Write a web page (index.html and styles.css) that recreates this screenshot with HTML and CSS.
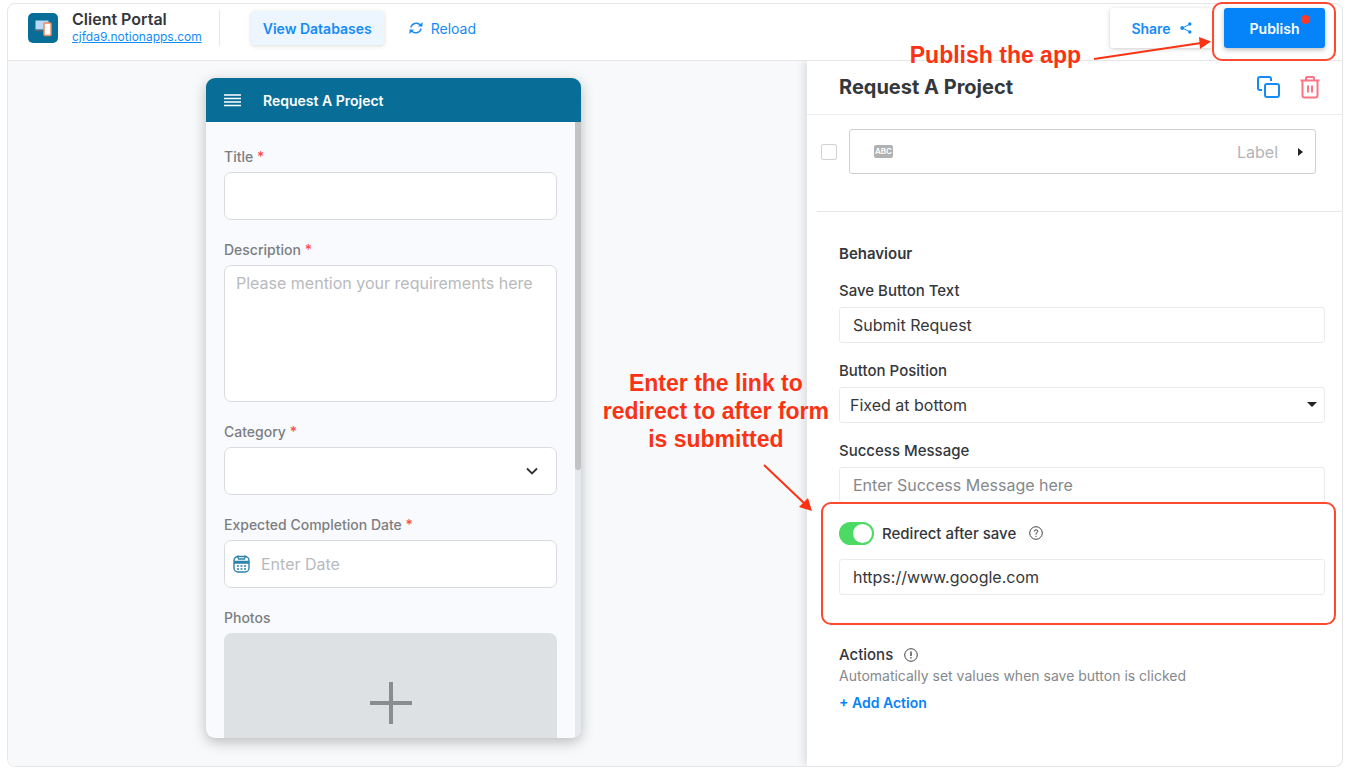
FILE: index.html
```
<!DOCTYPE html>
<html lang="en">
<head>
    <meta charset="UTF-8">
    <title>Client Portal</title>
    <meta name="viewport" content="width=device-width, initial-scale=1">
    <link rel="stylesheet" href="styles.css">
</head>
<body>
<div class="app">

    <header class="topbar">
        <svg class="logo" viewBox="0 0 30 30" aria-hidden="true">
            <rect width="30" height="30" rx="5" fill="#086e98"/>
            <rect x="7.500" y="7.500" width="13" height="9" fill="#b9d9f7"/>
            <path d="M6.500 17.500h9" stroke="#5a6470" stroke-width="1.500"/>
            <rect x="16" y="10" width="7" height="12.500" rx="1" fill="#fff" stroke="#ef8a5f" stroke-width="1.500"/>
        </svg>
        <div class="app-name">
            <h1>Client Portal</h1>
            <a href="#">cjfda9.notionapps.com</a>
        </div>
        <div class="separator"></div>
        <button class="btn btn-light" type="button">View Databases</button>
        <button class="btn-reload" type="button">
            <svg width="14" height="14" viewBox="0 0 14 14" fill="none" stroke="currentColor" stroke-width="1.500" aria-hidden="true">
                <path d="M2 6.500C2.500 2.500 8 0.500 11.500 4M12 7.500C11.500 11.500 6 13.500 2.500 10"/>
                <path d="M13.500 1v4.500h-4.500zM0.500 13V8.500h4.500z" fill="currentColor" stroke="none"/>
            </svg>
            Reload
        </button>
        <div class="topbar-right">
            <button class="btn btn-share" type="button">
                Share
                <svg width="12" height="12" viewBox="0 0 12 12" aria-hidden="true">
                    <path d="M10 2L2.500 6L10 10" fill="none" stroke="currentColor"/>
                    <g fill="currentColor"><circle cx="9.800" cy="2" r="1.700"/><circle cx="2.200" cy="6" r="1.900"/><circle cx="9.800" cy="10" r="1.700"/></g>
                </svg>
            </button>
            <div class="publish">
                <button class="btn btn-primary" type="button">Publish</button>
                <span class="dot"></span>
                <span class="highlight highlight-publish"></span>
                <p class="note note-publish">Publish the app</p>
                <svg class="arrow arrow-publish" width="120" height="26" viewBox="0 0 120 26" aria-hidden="true">
                    <path d="M1 22L108 6" stroke="#fb3314" stroke-width="2"/>
                    <path d="M106 0L118 4.500L107 12z" fill="#fb3314"/>
                </svg>
            </div>
        </div>
    </header>

    <main class="workspace">
        <section class="canvas">
            <div class="phone">
                <div class="phone-header">
                    <svg width="17" height="14" viewBox="0 0 17 14" aria-hidden="true">
                        <path d="M0 2h17M0 5.500h17M0 9h17M0 12.500h17" stroke="#fff" stroke-width="1.400"/>
                    </svg>
                    <h2>Request A Project</h2>
                </div>
                <div class="phone-body">
                    <form class="phone-form">
                        <div class="field">
                            <label for="title">Title <i>*</i></label>
                            <input id="title" type="text">
                        </div>
                        <div class="field">
                            <label for="description">Description <i>*</i></label>
                            <textarea id="description" placeholder="Please mention your requirements here"></textarea>
                        </div>
                        <div class="field">
                            <label for="category">Category <i>*</i></label>
                            <div class="control">
                                <select id="category"><option></option></select>
                                <svg class="chevron" width="12" height="8" viewBox="0 0 12 8" fill="none" stroke="#333" stroke-width="1.800" aria-hidden="true"><path d="M1 1.500L6 6.500L11 1.500"/></svg>
                            </div>
                        </div>
                        <div class="field">
                            <label for="date">Expected Completion Date <i>*</i></label>
                            <div class="control">
                                <svg class="calendar" width="17" height="18" viewBox="0 0 17 18" fill="none" stroke="#2d83ab" stroke-width="1.400" aria-hidden="true">
                                    <rect x="1" y="1.500" width="15" height="15.500" rx="4"/>
                                    <path d="M1 6.500h15M1 8h15M5 0.500v3M12 0.500v3M5 4h7"/>
                                    <path d="M4 11h2M7.500 11h2M11 11h2M4 14h2M7.500 14h2M11 14h2" stroke-width="1.600"/>
                                </svg>
                                <input id="date" class="with-icon" type="text" placeholder="Enter Date">
                            </div>
                        </div>
                        <div class="field">
                            <label for="photos">Photos</label>
                            <button id="photos" class="upload" type="button" aria-label="Add photos">
                                <svg width="42" height="42" viewBox="0 0 42 42" aria-hidden="true"><path d="M21 0v42M0 21h42" stroke="#8a8d8f" stroke-width="4"/></svg>
                            </button>
                        </div>
                    </form>
                    <div class="scrollbar"><div class="thumb"></div></div>
                </div>
            </div>
        </section>

        <aside class="panel">
            <div class="panel-header">
                <h2>Request A Project</h2>
                <button class="icon-btn" type="button" aria-label="Duplicate">
                    <svg width="24" height="24" viewBox="0 0 24 24" fill="none" stroke="#158bf8" stroke-width="2" aria-hidden="true">
                        <rect x="9" y="9" width="14" height="13" rx="2"/>
                        <path d="M6 15H4a2 2 0 0 1-2-2V4a2 2 0 0 1 2-2h9a2 2 0 0 1 2 2v2"/>
                    </svg>
                </button>
                <button class="icon-btn" type="button" aria-label="Delete">
                    <svg width="20" height="24" viewBox="0 0 20 24" fill="none" stroke="#fb7585" stroke-width="2" aria-hidden="true">
                        <path d="M0.500 5.500h19M6 5V3q0-1 1-1h6q1 0 1 1v2M2.500 6v14.500q0 2 2 2h11q2 0 2-2V6M8 10.500v7M12 10.500v7"/>
                    </svg>
                </button>
            </div>

            <div class="column-row">
                <input type="checkbox" aria-label="Show column">
                <button class="column-card" type="button">
                    <span class="tag">ABC</span>
                    <span class="column-label">Label</span>
                    <span class="caret-right"></span>
                </button>
            </div>

            <div class="settings">
                <h3>Behaviour</h3>
                <div class="setting">
                    <label for="save-text">Save Button Text</label>
                    <input id="save-text" type="text" value="Submit Request">
                </div>
                <div class="setting">
                    <label for="position">Button Position</label>
                    <div class="control">
                        <select id="position"><option>Fixed at bottom</option></select>
                        <span class="caret-down"></span>
                    </div>
                </div>
                <div class="setting">
                    <label for="message">Success Message</label>
                    <input id="message" type="text" placeholder="Enter Success Message here">
                </div>

                <div class="redirect">
                    <div class="toggle-row">
                        <input id="redirect" class="toggle" type="checkbox" checked>
                        <label for="redirect">Redirect after save</label>
                        <svg width="14" height="14" viewBox="0 0 14 14" fill="none" stroke="#444" aria-hidden="true">
                            <circle cx="7" cy="7" r="6.300"/><path d="M5.200 5.600q0-1.800 1.800-1.800t1.800 1.600q0 1-1.800 2v1.200M7 9.800v1.200"/>
                        </svg>
                    </div>
                    <input type="text" aria-label="Redirect link" value="https://www.google.com">
                    <span class="highlight highlight-redirect"></span>
                    <p class="note note-redirect">Enter the link to<br>redirect to after form<br>is submitted</p>
                    <svg class="arrow arrow-redirect" width="50" height="50" viewBox="0 0 50 50" aria-hidden="true">
                        <path d="M1 2L42 41" stroke="#fb3314" stroke-width="2"/>
                        <path d="M49 48L36 44L45 35z" fill="#fb3314"/>
                    </svg>
                </div>

                <div class="actions">
                    <h3>
                        Actions
                        <svg width="14" height="14" viewBox="0 0 14 14" fill="none" stroke="#444" aria-hidden="true">
                            <circle cx="7" cy="7" r="6.300"/><path d="M7 3.500v4.500M7 9.300v1.300" stroke-width="1.400"/>
                        </svg>
                    </h3>
                    <p>Automatically set values when save button is clicked</p>
                    <button class="add-action" type="button">+ Add Action</button>
                </div>
            </div>
        </aside>
    </main>

</div>
</body>
</html>
```
FILE: styles.css
```
*, *:before, *:after {
    box-sizing: border-box;
    margin: 0;
    padding: 0;
}

body {
    height: 100vh;
    padding: 3px 4px 1px 7px;
    background: #fff;
    color: #34373b;
    font-family: Inter, "Open Sans", sans-serif;
    font-size: 15px;
}

button, input, select, textarea {
    font: inherit;
    color: inherit;
}

button {
    border: 0;
    background: transparent;
    cursor: pointer;
}

.app {
    height: 100%;
    display: flex;
    flex-direction: column;
    border: 1px solid #e6e6e8;
    border-radius: 8px;
}

/* Top bar */
.topbar {
    height: 57px;
    flex-shrink: 0;
    display: flex;
    align-items: center;
    padding: 0 17px 8px 20px;
    border-bottom: 1px solid #e6e6e8;
}

.logo {
    width: 30px;
    height: 30px;
    margin-right: 14px;
}

.app-name h1 {
    font-size: 16px;
    font-weight: 600;
    line-height: 18px;
}

.app-name a {
    display: block;
    color: #158bf8;
    font-size: 12px;
    line-height: 18px;
}

.separator {
    width: 1px;
    height: 36px;
    margin: 0 31px 0 17px;
    background: #e6e6e8;
}

.btn {
    height: 40px;
    border-radius: 3px;
    font-size: 14px;
    font-weight: 600;
}

.btn-light {
    height: 34px;
    padding: 0 12px;
    background: #edf6ff;
    color: #158bf8;
    box-shadow: 0 1px 4px rgba(0, 0, 0, 0.15);
}

.btn-reload {
    display: flex;
    align-items: center;
    gap: 8px;
    margin-left: 25px;
    color: #158bf8;
    font-size: 14px;
}

.topbar-right {
    display: flex;
    gap: 11px;
    margin-left: auto;
}

.btn-share {
    width: 103px;
    display: flex;
    align-items: center;
    justify-content: center;
    gap: 9px;
    background: #fff;
    color: #158bf8;
    box-shadow: 0 1px 4px rgba(0, 0, 0, 0.2);
}

.publish {
    position: relative;
}

.btn-primary {
    width: 101px;
    background: #0583f8;
    color: #fff;
    box-shadow: 0 2px 5px rgba(0, 0, 0, 0.25);
}

.dot {
    position: absolute;
    top: 7px;
    right: 15px;
    width: 9px;
    height: 9px;
    border-radius: 50%;
    background: #fb3a2a;
}

/* Notes drawn over the app */
.highlight {
    position: absolute;
    z-index: 2;
    border: 2px solid #fb4a30;
    border-radius: 10px;
    pointer-events: none;
}

.highlight-publish {
    inset: -6px -11px -13px -12px;
}

.highlight-redirect {
    inset: -19px -11px -30px -18px;
}

.note {
    position: absolute;
    z-index: 2;
    color: #fb3314;
    font-family: "Liberation Sans", Arial, sans-serif;
    font-size: 23px;
    font-weight: 700;
    line-height: 28px;
    text-align: center;
    white-space: nowrap;
}

.note-publish {
    top: 33px;
    right: 244px;
}

.note-redirect {
    right: calc(100% + 10px);
    bottom: 142px;
}

.arrow {
    position: absolute;
    z-index: 2;
    fill: none;
}

.arrow-publish {
    top: 29px;
    right: 112px;
}

.arrow-redirect {
    right: calc(100% + 26px);
    bottom: 82px;
}

/* Preview */
.workspace {
    flex: 1;
    min-height: 0;
    display: flex;
}

.canvas {
    flex: 1;
    display: flex;
    justify-content: center;
    padding: 17px 28px 28px 0;
    border-radius: 0 0 0 8px;
    background: #f7f9fb;
}

.phone {
    width: 375px;
    display: flex;
    flex-direction: column;
    overflow: hidden;
    border-radius: 9px;
    background: #f9fafd;
    box-shadow: 0 4px 14px rgba(0, 0, 0, 0.25);
}

.phone-header {
    height: 44px;
    flex-shrink: 0;
    display: flex;
    align-items: center;
    gap: 22px;
    padding: 0 18px;
    background: #086e98;
    color: #fff;
}

.phone-header h2 {
    font-size: 14px;
    font-weight: 600;
}

.phone-body {
    flex: 1;
    min-height: 0;
    display: flex;
}

.phone-form {
    flex: 1;
    display: flex;
    flex-direction: column;
    gap: 21px;
    padding: 26px 18px 0;
    overflow: hidden;
}

.field label {
    display: block;
    margin-bottom: 6px;
    color: #7b7e82;
    font-size: 14px;
    font-weight: 500;
    line-height: 18px;
}

.field i {
    color: #ff4d4f;
    font-style: normal;
}

.field input,
.field select,
.field textarea {
    display: block;
    width: 100%;
    height: 48px;
    padding: 0 11px;
    border: 1px solid #d9dcdf;
    border-radius: 7px;
    background: #fff;
    font-size: 16px;
    appearance: none;
}

.field textarea {
    height: 137px;
    padding-top: 7px;
    resize: none;
}

.field input.with-icon {
    padding-left: 36px;
}

.field ::placeholder {
    color: #b8babd;
}

.control {
    position: relative;
}

.chevron {
    position: absolute;
    top: 20px;
    right: 19px;
}

.calendar {
    position: absolute;
    top: 15px;
    left: 9px;
}

.upload {
    width: 100%;
    height: 140px;
    border-radius: 8px;
    background: #dde1e3;
}

.upload svg {
    display: block;
    margin: 0 auto;
}

.scrollbar {
    width: 6px;
    background: #e6e8f0;
}

.thumb {
    height: 348px;
    border-radius: 0 0 3px 3px;
    background: #c3c3c5;
}

/* Settings panel */
.panel {
    flex: 0 0 535px;
    border-radius: 0 0 8px 0;
    background: #fff;
    box-shadow: -3px 0 10px rgba(0, 0, 0, 0.12);
    clip-path: inset(0 0 0 -240px);
}

.panel-header {
    height: 54px;
    display: flex;
    align-items: center;
    gap: 20px;
    padding: 0 22px 2px 32px;
    border-bottom: 1px solid #ededee;
}

.panel-header h2 {
    flex: 1;
    font-size: 20px;
    font-weight: 700;
}

.icon-btn svg {
    display: block;
}

.column-row {
    display: flex;
    align-items: center;
    gap: 12px;
    margin-left: 10px;
    padding: 14px 26px 37px 4px;
    border-bottom: 1px solid #e6e6e8;
}

.column-row input {
    width: 16px;
    height: 16px;
    border: 1px solid #d2d3d5;
    border-radius: 2px;
    appearance: none;
}

.column-card {
    flex: 1;
    height: 45px;
    display: flex;
    align-items: center;
    padding: 0 12px 0 24px;
    border: 1px solid #cfd0d2;
    border-radius: 3px;
}

.tag {
    padding: 0 1px;
    border-radius: 2px;
    background: #b0b1b3;
    color: #fff;
    font-size: 8px;
    font-weight: 600;
    line-height: 13px;
}

.column-label {
    margin: 0 20px 0 auto;
    color: #b2b4b7;
    font-size: 16px;
}

.caret-right {
    border: 4px solid transparent;
    border-left: 5px solid #222;
    border-right: 0;
}

.caret-down {
    position: absolute;
    top: 15px;
    right: 8px;
    border: 5px solid transparent;
    border-top-color: #222;
    border-bottom: 0;
}

.settings {
    padding: 33px 17px 0 32px;
}

.settings h3 {
    font-size: 15px;
    font-weight: 600;
    line-height: 18px;
}

.setting {
    margin-top: 19px;
}

.setting label {
    display: block;
    margin-bottom: 7px;
    font-weight: 500;
    line-height: 18px;
}

.settings input[type="text"],
.settings select {
    display: block;
    width: 100%;
    height: 36px;
    padding: 0 13px;
    border: 1px solid #ebebed;
    border-radius: 3px;
    background: #fff;
    font-size: 16px;
    appearance: none;
}

.settings select {
    padding: 0 10px;
}

.settings ::placeholder {
    color: #85888c;
}

.redirect {
    position: relative;
    margin-top: 18px;
}

.toggle-row {
    display: flex;
    align-items: center;
    height: 24px;
    margin-bottom: 14px;
    font-weight: 500;
}

.toggle-row label {
    margin: 0 13px 0 8px;
}

.toggle {
    width: 35px;
    height: 23px;
    padding: 2px;
    border-radius: 12px;
    background: #4cd964;
    appearance: none;
}

.toggle:before {
    content: "";
    display: block;
    width: 19px;
    height: 19px;
    margin-left: auto;
    border-radius: 50%;
    background: #fff;
}

.actions {
    margin-top: 51px;
}

.actions h3 {
    display: flex;
    align-items: center;
    gap: 11px;
    font-weight: 500;
}

.actions p {
    color: #85888c;
    font-size: 14px;
    line-height: 24px;
}

.add-action {
    margin-top: 5px;
    color: #0583f8;
    font-size: 14px;
    font-weight: 600;
    line-height: 20px;
}
```
